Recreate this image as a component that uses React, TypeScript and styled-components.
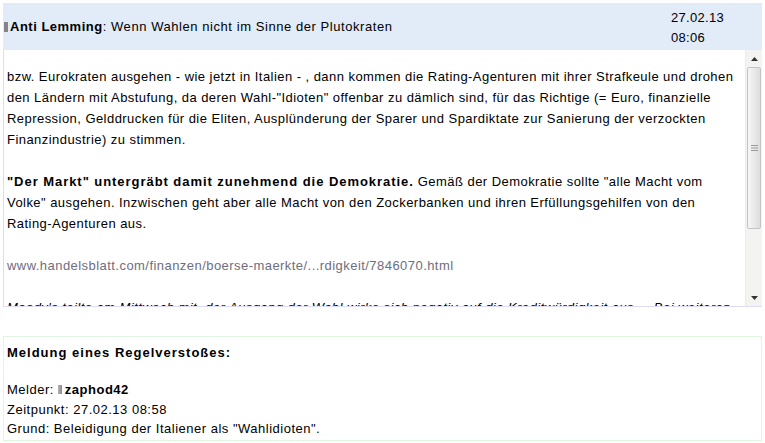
import React from "react";
import styled, { createGlobalStyle } from "styled-components";

const Global = createGlobalStyle`
  html, body { margin: 0; padding: 0; background: #ffffff; }
  body { font-family: "Liberation Sans", Arial, sans-serif; font-size: 13px; color: #000; }
`;

const Page = styled.div`
  padding: 3px 3px 0 3px;
  display: flex;
  flex-direction: column;
`;

const Header = styled.div`
  background: #e2ebf8;
  height: 47px;
  display: flex;
  align-items: center;
  justify-content: space-between;
  padding: 0 0 0 1px;
  letter-spacing: 0.56px;
`;

const Title = styled.div`
  display: flex;
  align-items: center;
  gap: 2px;
  line-height: 20px;
`;

const StatusBar = styled.span<{ $light?: boolean }>`
  display: inline-block;
  width: 4px;
  height: ${(p) => (p.$light ? "9px" : "10px")};
  background: ${(p) => (p.$light ? "linear-gradient(to right, #b4b4b4, #8c8c8c)" : "#858585")};
  margin: ${(p) => (p.$light ? "0 3px 0 4px" : "0")};
`;

const Author = styled.b`
  font-weight: bold;
  letter-spacing: 0.5px;
`;

const DateBlock = styled.div`
  width: 91px;
  line-height: 20px;
  align-self: flex-start;
  padding-top: 5px;
  letter-spacing: 0.3px;
`;

const Body = styled.div`
  height: 256px;
  display: flex;
  border-left: 1px solid #dcdcf5;
  border-bottom: 1px solid #dcdcf5;
`;

const Text = styled.div`
  flex: 1;
  overflow: hidden;
  padding: 16px 4px 0 3px;
  line-height: 21px;
  letter-spacing: 0.45px;
`;

const Para = styled.p<{ $italic?: boolean }>`
  margin: 0 0 21px 0;
  font-style: ${(p) => (p.$italic ? "italic" : "normal")};
`;

const Strong = styled.b`
  font-weight: bold;
  letter-spacing: 0.95px;
`;

const Link = styled.span`
  color: #6e6e7e;
`;

const Scrollbar = styled.div`
  width: 16px;
  display: flex;
  flex-direction: column;
  background: #f3f3f1;
  border-left: 1px solid #ececec;
`;

const ScrollButton = styled.div`
  height: 17px;
  display: flex;
  align-items: center;
  justify-content: center;
`;

const Thumb = styled.div`
  height: 160px;
  margin: 0 1px;
  border: 1px solid #c4c4c4;
  border-radius: 2px;
  background: linear-gradient(to right, #f6f6f6, #e8e8e8 60%, #dcdcdc);
  display: flex;
  align-items: center;
  justify-content: center;
`;

const Track = styled.div`
  flex: 1;
`;

const Report = styled.div`
  margin-top: 29px;
  border: 1px solid #e0f6e0;
  padding: 6px 3px 1px 3px;
  line-height: 19.5px;
  letter-spacing: 0.5px;
`;

const ReportTitle = styled.div`
  font-weight: bold;
  letter-spacing: 1px;
  margin-bottom: 17.5px;
`;

const Row = styled.div`
  display: flex;
  align-items: center;
`;

const Arrow = ({ up }: { up?: boolean }) => (
  <svg width="7" height="4" viewBox="0 0 7 4">
    {up ? <polygon points="0,4 7,4 3.5,0" fill="#333" /> : <polygon points="0,0 7,0 3.5,4" fill="#333" />}
  </svg>
);

const Grip = () => (
  <svg width="7" height="6" viewBox="0 0 7 6">
    <rect x="0" y="0" width="7" height="1" fill="#9a9a9a" />
    <rect x="0" y="2.5" width="7" height="1" fill="#9a9a9a" />
    <rect x="0" y="5" width="7" height="1" fill="#9a9a9a" />
  </svg>
);

export default function App() {
  return (
    <>
      <Global />
      <Page>
        <Header>
          <Title>
            <StatusBar />
            <span>
              <Author>Anti Lemming</Author>: Wenn Wahlen nicht im Sinne der Plutokraten
            </span>
          </Title>
          <DateBlock>
            27.02.13
            <br />
            08:06
          </DateBlock>
        </Header>
        <Body>
          <Text>
            <Para>
              bzw. Eurokraten ausgehen - wie jetzt in Italien - , dann kommen die Rating-Agenturen mit ihrer Strafkeule und drohen den Ländern mit Abstufung, da deren Wahl-"Idioten" offenbar zu dämlich sind, für das Richtige (= Euro, finanzielle Repression, Gelddrucken für die Eliten, Ausplünderung der Sparer und Spardiktate zur Sanierung der verzockten Finanzindustrie) zu stimmen.
            </Para>
            <Para>
              <Strong>"Der Markt" untergräbt damit zunehmend die Demokratie.</Strong> Gemäß der Demokratie sollte "alle Macht vom Volke" ausgehen. Inzwischen geht aber alle Macht von den Zockerbanken und ihren Erfüllungsgehilfen von den Rating-Agenturen aus.
            </Para>
            <Para>
              <Link>www.handelsblatt.com/finanzen/boerse-maerkte/...rdigkeit/7846070.html</Link>
            </Para>
            <Para $italic>
              Moody's teilte am Mittwoch mit, der Ausgang der Wahl wirke sich negativ auf die Kreditwürdigkeit aus. – Bei weiteren Neuwahlen drohe eine Herabstufung.
            </Para>
          </Text>
          <Scrollbar>
            <ScrollButton>
              <Arrow up />
            </ScrollButton>
            <Thumb>
              <Grip />
            </Thumb>
            <Track />
            <ScrollButton>
              <Arrow />
            </ScrollButton>
          </Scrollbar>
        </Body>
        <Report>
          <ReportTitle>Meldung eines Regelverstoßes:</ReportTitle>
          <Row>
            Melder:<StatusBar $light />
            <b>zaphod42</b>
          </Row>
          <div>Zeitpunkt: 27.02.13 08:58</div>
          <div>Grund: Beleidigung der Italiener als "Wahlidioten".</div>
        </Report>
      </Page>
    </>
  );
}
